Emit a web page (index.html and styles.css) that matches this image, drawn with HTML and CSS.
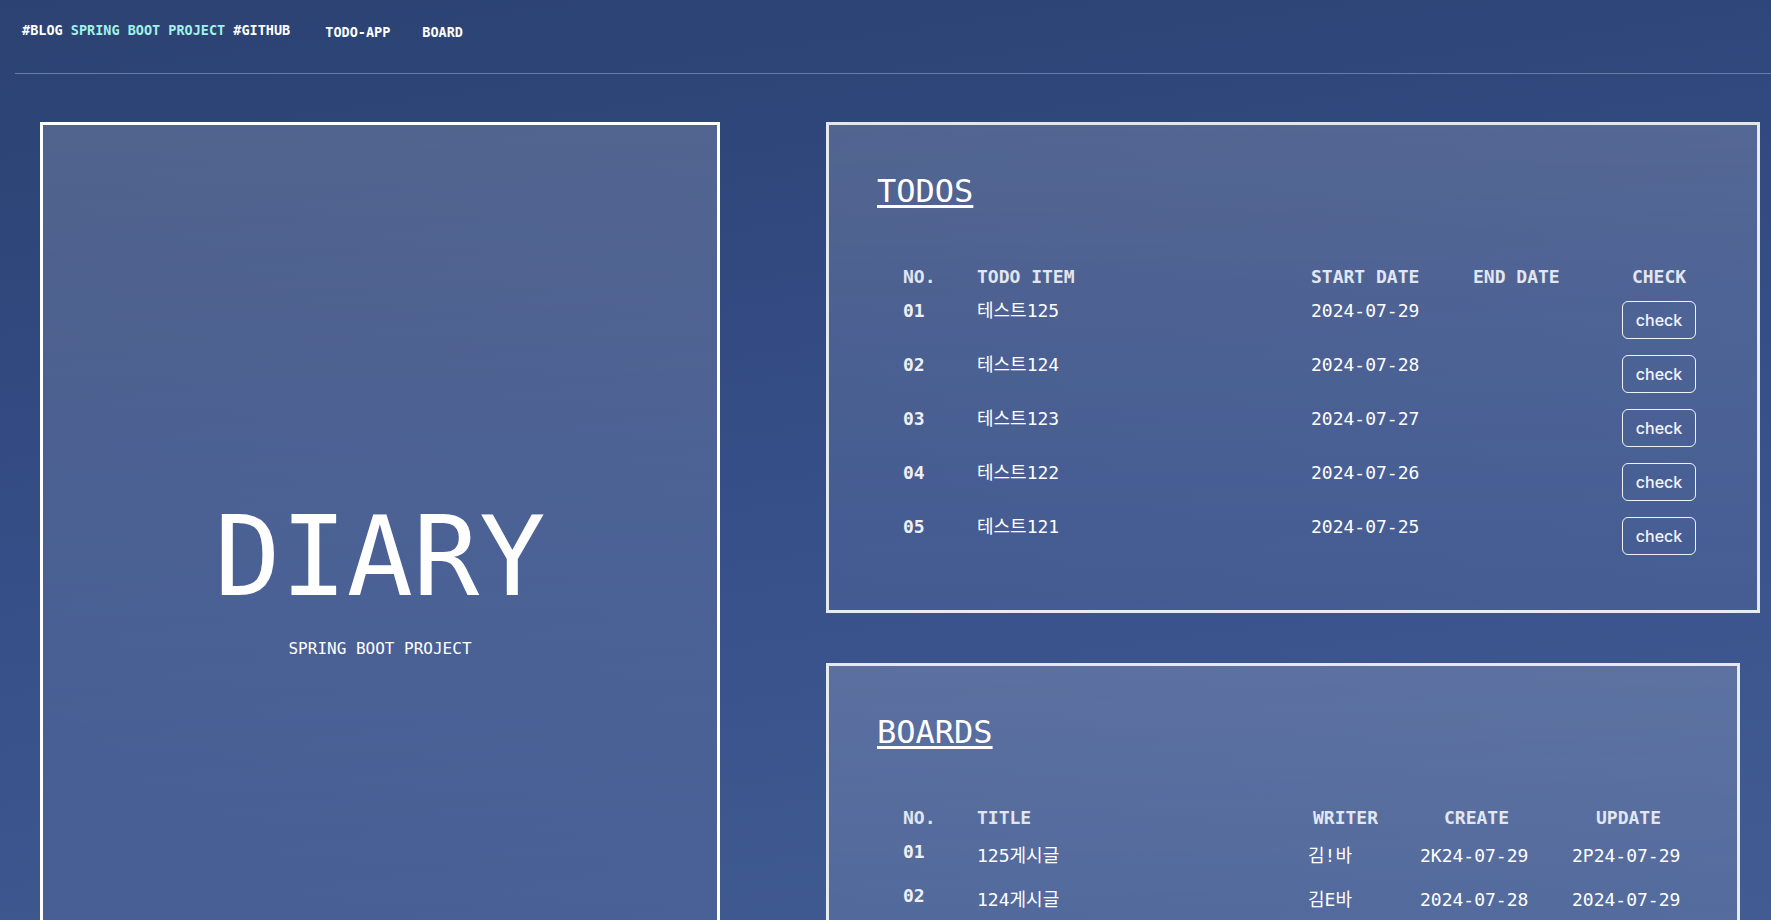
FILE: index.html
```html
<!DOCTYPE html>
<html lang="ko">
<head>
<meta charset="utf-8">
<title>DIARY</title>
<link rel="stylesheet" href="styles.css">
</head>
<body>
<header class="topbar">
  <nav class="nav">
    <a class="brand" href="#">#BLOG <span class="accent">SPRING BOOT PROJECT</span> #GITHUB</a>
    <a class="nav-link" href="#">TODO-APP</a>
    <a class="nav-link" href="#">BOARD</a>
  </nav>
  <div class="rule"></div>
</header>
<main class="layout">
  <section class="hero">
    <h1 class="hero-title">DIARY</h1>
    <p class="hero-sub">SPRING BOOT PROJECT</p>
  </section>
  <div class="side">
    <section class="panel panel-todos">
      <h2 class="panel-title">TODOS</h2>
      <div class="grid todo-grid">
        <div class="th">NO.</div><div class="th">TODO ITEM</div><div class="th">START DATE</div><div class="th">END DATE</div><div class="th center">CHECK</div>

        <div class="td no">01</div><div class="td">테스트125</div><div class="td">2024-07-29</div><div class="td"></div><div class="td center"><button class="check-btn">check</button></div>
        <div class="td no">02</div><div class="td">테스트124</div><div class="td">2024-07-28</div><div class="td"></div><div class="td center"><button class="check-btn">check</button></div>
        <div class="td no">03</div><div class="td">테스트123</div><div class="td">2024-07-27</div><div class="td"></div><div class="td center"><button class="check-btn">check</button></div>
        <div class="td no">04</div><div class="td">테스트122</div><div class="td">2024-07-26</div><div class="td"></div><div class="td center"><button class="check-btn">check</button></div>
        <div class="td no">05</div><div class="td">테스트121</div><div class="td">2024-07-25</div><div class="td"></div><div class="td center"><button class="check-btn">check</button></div>
      </div>
    </section>
    <section class="panel panel-boards">
      <h2 class="panel-title">BOARDS</h2>
      <div class="grid board-grid">
        <div class="th">NO.</div><div class="th">TITLE</div><div class="th th-writer">WRITER</div><div class="th th-date">CREATE</div><div class="th th-date">UPDATE</div>

        <div class="td no">01</div><div class="td low">125게시글</div><div class="td low">김!바</div><div class="td low">2K24-07-29</div><div class="td low">2P24-07-29</div>
        <div class="td no">02</div><div class="td low">124게시글</div><div class="td low">김E바</div><div class="td low">2024-07-28</div><div class="td low">2024-07-29</div>
      </div>
    </section>
  </div>
</main>
</body>
</html>
```
FILE: styles.css
```css
* { box-sizing: border-box; }

html, body {
  margin: 0;
  height: 100%;
  overflow: hidden;
}

body {
  font-family: "DejaVu Sans Mono", "Noto Sans CJK KR", monospace;
  color: #ffffff;
  background: linear-gradient(172deg, #2b4272 0%, #2f467a 20%, #37508a 55%, #425c93 100%);
}

a { color: inherit; text-decoration: none; }

/* ---------- top bar ---------- */
.nav {
  display: flex;
  align-items: flex-start;
  gap: 32px;
  padding: 22px 0 0 22px;
  font-size: 13.5px;
  line-height: 16px;
  font-weight: bold;
}
.brand { margin-right: 3px; }
.nav-link { padding-top: 2px; }
.accent { color: #a2f1e8; }

.rule {
  margin: 33px 0 0 15px;
  height: 1px;
  background: #687ca6;
}

/* ---------- layout ---------- */
.layout {
  display: flex;
  align-items: flex-start;
  gap: 106px;
  padding: 48px 0 0 40px;
}

.hero {
  flex: none;
  width: 680px;
  height: 913px;
  padding-top: 4px;
  border: 3px solid #ffffff;
  background: linear-gradient(180deg, rgba(255,255,255,0.17), rgba(255,255,255,0.03));
  display: flex;
  flex-direction: column;
  align-items: center;
  justify-content: center;
}
.hero-title {
  margin: 0;
  font-size: 110px;
  line-height: 110px;
  font-weight: normal;
}
.hero-sub {
  margin: 27px 0 0;
  font-size: 16px;
  line-height: 20px;
}

.side {
  display: flex;
  flex-direction: column;
  gap: 50px;
}

.panel {
  border: 3px solid rgba(255,255,255,0.86);
  background: linear-gradient(180deg, rgba(255,255,255,0.17), rgba(255,255,255,0.05));
  padding: 46px 48px 0 48px;
}
.panel-todos { width: 934px; height: 491px; }
.panel-boards { width: 914px; height: 420px; }

.panel-title {
  margin: 0;
  font-size: 32px;
  line-height: 40px;
  font-weight: normal;
  text-decoration: underline;
  text-decoration-thickness: 3px;
  text-underline-offset: 3px;
}

/* ---------- tables ---------- */
.grid {
  display: grid;
  margin: 55px 0 0 26px;
  font-size: 18px;
  line-height: 22px;
}
.todo-grid {
  grid-template-columns: 74px 334px 162px 127px 118px;
  grid-template-rows: 34px repeat(5, 54px);
}
.board-grid {
  grid-template-columns: 74px 331px 112px 152px 130px;
  grid-template-rows: 34px repeat(2, 44px);
}

.th {
  font-weight: bold;
  color: #e2e6f0;
  white-space: nowrap;
}
.th-writer { padding-left: 5px; }
.th-date { padding-left: 24px; }

.td { white-space: nowrap; }
.td.no { font-weight: bold; color: #eef0f6; }
.td.low { padding-top: 4px; }
.center { text-align: center; }

.check-btn {
  margin-top: 1px;
  width: 74px;
  height: 38px;
  border: 1px solid rgba(255,255,255,0.92);
  border-radius: 6px;
  background: transparent;
  color: #f2f5ff;
  font-family: Inter, "Noto Sans", sans-serif;
  font-size: 16px;
  font-weight: 500;
  padding: 0;
}
```
